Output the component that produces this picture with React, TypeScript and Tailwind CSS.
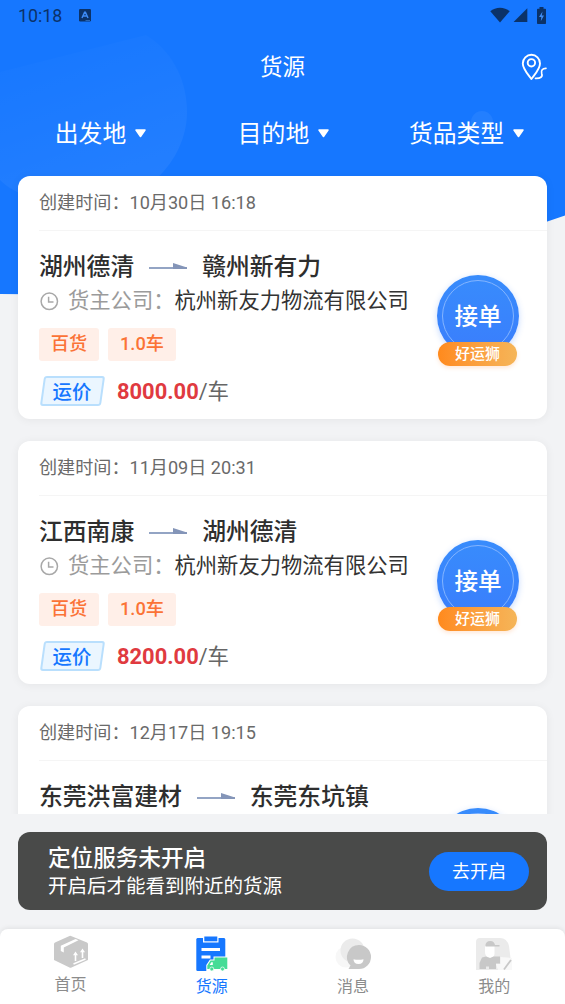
const orders = [
  {
    created: "10月30日 16:18",
    from: "湖州德清",
    to: "赣州新有力",
    company: "杭州新友力物流有限公司",
    goods: "百货",
    amount: "1.0车",
    price: "8000.00",
  },
  {
    created: "11月09日 20:31",
    from: "江西南康",
    to: "湖州德清",
    company: "杭州新友力物流有限公司",
    goods: "百货",
    amount: "1.0车",
    price: "8200.00",
  },
  {
    created: "12月17日 19:15",
    from: "东莞洪富建材",
    to: "东莞东坑镇",
  },
];

const filters = ["出发地", "目的地", "货品类型"];

function HeaderBackground() {
  return (
    <svg className="absolute left-0 top-0" width="565" height="296" viewBox="0 0 565 296">
      <defs>
        <linearGradient id="bubble" x1="0.2" y1="0" x2="0.6" y2="1">
          <stop offset="0" stopColor="#fff" stopOpacity="0.005" />
          <stop offset="1" stopColor="#fff" stopOpacity="0.06" />
        </linearGradient>
      </defs>
      <path d="M0 0H565V215.500L540 224Q280 306 60 294.500L0 294Z" fill="#1677ff" />
      <path d="M0 72L146 35C170 50 186 76 187 110C188 155 150 205 85 205C45 205 15 195 0 180Z" fill="url(#bubble)" />
      <circle cx="482" cy="122" r="11" fill="#fff" opacity="0.06" />
    </svg>
  );
}

function StatusBar() {
  return (
    <div className="flex h-8 shrink-0 items-center pl-[18px] pr-[19px] text-[#0b3268]">
      <span className="text-[17.8px] leading-none">10:18</span>
      <svg className="-mt-0.5 ml-[17px]" width="12" height="13" viewBox="0 0 12 13">
        <rect width="12" height="12.500" rx="1.200" fill="#0b3268" />
        <path d="M3 9L5.600 3.200H6.400L9 9M4.200 7H7.800" fill="none" stroke="#3d8bf5" strokeWidth="1.500" />
        <path d="M6.500 11.500H11" stroke="#2a66b5" strokeWidth="1" />
      </svg>
      <div className="-mt-0.5 ml-auto flex items-center">
        <svg width="20" height="16" viewBox="0 0 20 16">
          <path d="M0.300 4.200C5.500 -0.500 14.500 -0.500 19.700 4.200L10 15.500Z" fill="#0b3268" />
        </svg>
        <svg className="ml-[3px]" width="15" height="14" viewBox="0 0 15 14">
          <path d="M14.300 0.300V14H0.600Z" fill="#0b3268" />
        </svg>
        <svg className="ml-[9px]" width="9" height="17" viewBox="0 0 9 17">
          <path d="M2.500 1.700V0H6.500V1.700H8.200Q9 1.700 9 2.500V16.200Q9 17 8.200 17H0.800Q0 17 0 16.200V2.500Q0 1.700 0.800 1.700Z" fill="#0b3268" />
          <path d="M5.500 4.500L2 10H4.300L3.800 14.300L7 8.500H4.800Z" fill="#3f8cf2" />
        </svg>
      </div>
    </div>
  );
}

function RouteIcon() {
  return (
    <svg width="26" height="28" viewBox="0 0 26 28" fill="none" stroke="#fff" strokeWidth="1.900" strokeLinecap="round" strokeLinejoin="round">
      <path d="M10.400 26C7.300 21.500 1.800 16 1.800 10.400A8.600 8.600 0 0 1 19 10.400C19 16 13.500 21.500 10.400 26Z" />
      <circle cx="10.400" cy="9.800" r="3.700" />
      <path d="M14.500 25.300C19.500 25.500 22 23.800 20.700 20.500C19.800 17.500 21.500 15.200 25 15.300" strokeWidth="1.700" />
    </svg>
  );
}

function RouteArrow() {
  return (
    <svg className="mx-[15px]" width="38" height="8" viewBox="0 0 38 8">
      <path d="M0 4H38V6H0Z" fill="#93a4c4" />
      <path d="M24 0L38 4.500V6H24Z" fill="#8495b8" />
    </svg>
  );
}

function ClockIcon() {
  return (
    <svg width="20" height="19" viewBox="0 0 20 19" fill="none" stroke="#a8a8a8" strokeWidth="1.500">
      <circle cx="10.300" cy="9.300" r="8.200" />
      <path d="M9.600 4.700V10H14.500" />
    </svg>
  );
}

type Order = {
  created: string;
  from: string;
  to: string;
  company?: string;
  goods?: string;
  amount?: string;
  price?: string;
};

function AcceptButton({ ready }: { ready: boolean }) {
  return (
    <button
      className={`absolute right-7 flex w-[82px] flex-col items-center text-white ${ready ? "top-[99px]" : "top-[102px]"}`}
    >
      <span className="flex size-[82px] items-center justify-center rounded-full bg-linear-to-b from-[#388cfc] to-[#3a7dfc] shadow-[0_2px_6px_rgba(58,128,252,0.3)]">
        <span className="flex size-[72px] items-center justify-center rounded-full border-[1.5px] border-[#84b5ff] pt-1 text-[23.6px] font-medium leading-none">
          {ready && "接单"}
        </span>
      </span>
      {ready && (
        <span className="-mt-[15px] mr-px flex h-6 w-[79px] items-center justify-center rounded-full bg-linear-to-r from-[#ff8a1c] to-[#f5b558] pt-px text-[15px] font-medium leading-none shadow-[0_2px_4px_rgba(255,140,60,0.2)]">
          好运狮
        </span>
      )}
    </button>
  );
}

function OrderCard({ order }: { order: Order }) {
  return (
    <article className="relative h-[243px] shrink-0 rounded-xl bg-white pl-[21px] shadow-[0_1px_10px_rgba(0,0,0,0.06)]">
      <div className="flex h-[55px] items-center border-b border-[#f5f5f5] pt-px text-[18.1px] leading-none text-[#6a6a6a]">
        创建时间：{order.created}
      </div>
      <div className="mt-6 flex h-6 items-center text-[23.8px] font-medium leading-6 text-[#2e2e2e]">
        <span>{order.from}</span>
        <RouteArrow />
        <span>{order.to}</span>
      </div>
      {order.company && (
        <div className="mt-2.5 flex h-6 items-center text-[21.3px] leading-6 text-[#333]">
          <ClockIcon />
          <span className="ml-[9px] text-[#9b9b9b]">货主公司：</span>
          <span>{order.company}</span>
        </div>
      )}
      {order.goods && (
        <div className="mt-[15px] flex gap-[9px] text-[18.2px] font-medium leading-none text-[#fb7336]">
          <span className="flex h-[33px] w-[60px] items-center justify-center rounded-[3px] bg-[#ffefe8]">{order.goods}</span>
          <span className="flex h-[33px] w-[68px] items-center justify-center rounded-[3px] bg-[#ffefe8]">{order.amount}</span>
        </div>
      )}
      {order.price && (
        <div className="mt-[15px] flex h-[30px] items-center">
          <span className="relative flex h-[30px] w-[66px] items-center justify-center">
            <span className="absolute inset-x-[2.5px] inset-y-0 -skew-x-[8deg] rounded-[3px] border-2 border-[#b9dffd] bg-[#ebf6ff]" />
            <span className="relative pt-1 text-[19.4px] font-medium leading-none text-[#1677ff]">运价</span>
          </span>
          <span className="ml-3 pt-px text-[21.9px] font-bold leading-none text-[#e03a40]">{order.price}</span>
          <span className="pt-px text-[21.5px] leading-none text-[#666]">/车</span>
        </div>
      )}
      <AcceptButton ready={Boolean(order.price)} />
    </article>
  );
}

function HomeIcon() {
  return (
    <svg width="36" height="34" viewBox="0 0 36 34">
      <path d="M18 1L34 7.500Q35 8 35 9V25L18.500 32.500Q17.500 33 16.500 32.500L1 25V9Q1 8 2 7.500L16.500 1Q17.200 0.700 18 1Z" fill="#c9c9c9" />
      <path d="M7.800 10.800L22.500 4L25.500 5.300L10.800 12.500V17.500L7.800 16Z" fill="#fff" />
      <path d="M22.500 26V19M29.500 23V16" fill="none" stroke="#fff" strokeWidth="1.600" />
      <path d="M20 20.300L22.500 16.500L25 20.300ZM27 17.300L29.500 13.500L32 17.300Z" fill="#fff" />
      <path d="M20.500 29L32.500 24" fill="none" stroke="#fff" strokeWidth="1.400" />
    </svg>
  );
}

function SourceIcon() {
  return (
    <svg width="32" height="36" viewBox="0 0 32 36">
      <path d="M1.500 2H28Q29.300 2 29.300 3.500V33.500Q29.300 35 28 35H1.500Q0.300 35 0.300 33.500V3.500Q0.300 2 1.500 2Z" fill="#1677ff" />
      <path d="M7 0H22.500V6.500H7Z" fill="#fff" />
      <rect x="8.300" y="0.500" width="13" height="4.800" fill="#1677ff" />
      <path d="M5.500 13.500H24M5.500 21H14.500" stroke="#fff" strokeWidth="2.800" />
      <path d="M10.300 36V29L14 23.500H17.500V20.500H32V36Z" fill="#fff" />
      <path d="M18.500 21.500H31.300V33H11.300V29.500L14.500 24.500H18.500Z" fill="#45dc96" />
      <path d="M15.300 26.300H16.800V29H13.700Z" fill="#fff" />
      <circle cx="15.800" cy="33" r="2" fill="#45dc96" stroke="#fff" strokeWidth="0.700" />
      <circle cx="26.500" cy="33" r="2" fill="#45dc96" stroke="#fff" strokeWidth="0.700" />
    </svg>
  );
}

function MessageIcon() {
  return (
    <svg width="36" height="32" viewBox="0 0 36 32">
      <circle cx="11" cy="19" r="10.500" fill="#f7f7f7" />
      <circle cx="17.500" cy="12.500" r="12" fill="#ebebeb" />
      <path d="M24 7A12 12 0 1 1 24 31H13.500L15.500 27.500A12 12 0 0 1 24 7Z" fill="#c8c8c8" />
      <path d="M18.500 21.300Q23.500 22.300 28.500 21.300Q28.500 26 23.500 26T18.500 21.300Z" fill="#fff" />
    </svg>
  );
}

function ProfileIcon() {
  return (
    <svg width="36" height="32" viewBox="0 0 36 32">
      <path d="M4 0H24Q31 0 33 8L36 32H0V4Q0 0 4 0Z" fill="#ebebeb" />
      <path d="M9 8H18.500V16Q18 20 14 20Q9 19 9 14Z" fill="#fff" />
      <path d="M9.500 8.500Q9 3 14.500 3Q18 3 19 7H23.500V8.500H9.500Z" fill="#c8c8c8" />
      <path d="M3.500 31V25L6 19.500L10 18.500L14 20L17.500 18.500H24V25.500H20V31H13V28.500H10V31Z" fill="#c8c8c8" />
      <path d="M24.500 19L36 20V32H22L20 26H24.500Z" fill="#f8f8f8" />
      <path d="M35 22L28 31.500" stroke="#c8c8c8" strokeWidth="1.800" />
    </svg>
  );
}

const tabs = [
  { label: "首页", icon: <HomeIcon />, active: false, offset: "pt-[5px]" },
  { label: "货源", icon: <SourceIcon />, active: true, offset: "pt-[7px]" },
  { label: "消息", icon: <MessageIcon />, active: false, offset: "pt-[7px]" },
  { label: "我的", icon: <ProfileIcon />, active: false, offset: "pt-[7px]" },
];

export default function App() {
  return (
    <div className="relative flex h-[1004px] w-[565px] flex-col overflow-hidden bg-[#f2f3f5] font-['Roboto','Noto_Sans_CJK_SC',sans-serif]">
      <HeaderBackground />

      <header className="relative shrink-0 text-white">
        <StatusBar />
        <div className="grid h-[70px] grid-cols-[1fr_auto_1fr] items-center pr-[18px]">
          <h1 className="col-start-2 ml-[18px] pt-px text-[22.5px] leading-none">货源</h1>
          <button className="justify-self-end">
            <RouteIcon />
          </button>
        </div>
        <div className="grid h-[62px] grid-cols-3 pl-[9px] pr-[7px]">
          {filters.map((label) => (
            <button key={label} className="flex items-center justify-center gap-[9px] text-[23.8px] leading-none">
              <span className="pt-[3px]">{label}</span>
              <svg width="11" height="9" viewBox="0 0 11 9">
                <path d="M1 1H10L5.500 7.500Z" fill="#fff" stroke="#fff" strokeWidth="1.500" strokeLinejoin="round" />
              </svg>
            </button>
          ))}
        </div>
      </header>

      {/* Order list */}
      <main className="relative flex h-[650px] shrink-0 flex-col gap-[22px] overflow-hidden px-[18px] pt-3">
        {orders.map((order) => (
          <OrderCard key={order.created} order={order} />
        ))}
      </main>

      {/* Location prompt */}
      <section className="mx-[18px] mt-[18px] flex h-[78px] shrink-0 items-center justify-between rounded-xl bg-[#494a49] pl-[30px] pr-[18px] text-white">
        <div className="pt-[3px]">
          <p className="text-[22.6px] font-medium leading-7">定位服务未开启</p>
          <p className="text-[19.5px] leading-7">开启后才能看到附近的货源</p>
        </div>
        <button className="h-[39px] w-[100px] rounded-full bg-[#1677ff] pt-px text-[18px] leading-none">去开启</button>
      </section>

      <nav className="mt-[19px] grid h-[75px] shrink-0 grid-cols-4 rounded-t-lg bg-white shadow-[0_-1px_5px_rgba(0,0,0,0.08)]">
        {tabs.map((tab) => (
          <button key={tab.label} className={`flex flex-col items-center ${tab.offset}`}>
            <span className="flex h-9 items-center">{tab.icon}</span>
            <span className={`mt-[7px] text-[16px] leading-4 ${tab.active ? "text-[#1677ff]" : "text-[#8c8c8c]"}`}>
              {tab.label}
            </span>
          </button>
        ))}
      </nav>
    </div>
  );
}
